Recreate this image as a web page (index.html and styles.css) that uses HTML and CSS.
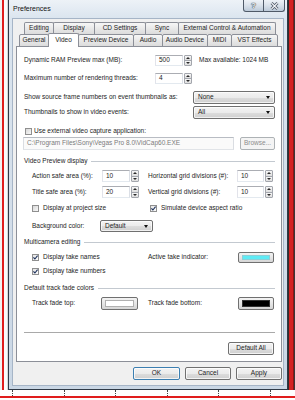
FILE: index.html
```html
<!DOCTYPE html>
<html>
<head>
<meta charset="utf-8">
<title>Preferences</title>
<link rel="stylesheet" href="styles.css">
</head>
<body>
<div class="screen">
  <div class="left-strip"></div>
  <div class="dialog">
    <div class="titlebar">
      <div class="title">Preferences</div>
      <div class="caption">
        <div class="capbtn helpbtn">?</div>
        <div class="capbtn closebtn"><svg width="9" height="8" viewBox="0 0 9 8"><path d="M1.5 1 L7.5 7 M7.5 1 L1.5 7" stroke="#4d5765" stroke-width="2.8"/><path d="M1.5 1 L7.5 7 M7.5 1 L1.5 7" stroke="#f4f6f9" stroke-width="1.1"/></svg></div>
      </div>
    </div>
    <div class="client">
      <div class="tabs">
        <div class="tabrow row1">
          <span class="tab t-editing">Editing</span>
          <span class="tab t-display">Display</span>
          <span class="tab t-cd">CD Settings</span>
          <span class="tab t-sync">Sync</span>
          <span class="tab t-ext">External Control &amp; Automation</span>
        </div>
        <div class="tabrow row2">
          <span class="tab t-general">General</span>
          <span class="tab t-video sel">Video</span>
          <span class="tab t-preview">Preview Device</span>
          <span class="tab t-audio">Audio</span>
          <span class="tab t-audiodev">Audio Device</span>
          <span class="tab t-midi">MIDI</span>
          <span class="tab t-vst">VST Effects</span>
        </div>
      </div>
      <div class="panel">
        <div class="row r-ram">
          <span class="lbl w-top">Dynamic RAM Preview max (MB):</span>
          <span class="field w-num">500</span>
          <span class="spin"><i class="up"></i><i class="dn"></i></span>
          <span class="note">Max available: 1024 MB</span>
        </div>
        <div class="row r-threads">
          <span class="lbl w-top">Maximum number of rendering threads:</span>
          <span class="field w-num">4</span>
          <span class="spin"><i class="up"></i><i class="dn"></i></span>
        </div>
        <div class="row r-source">
          <span class="lbl w-combo">Show source frame numbers on event thumbnails as:</span>
          <span class="combo w-wide"><span>None</span><i class="arrow"></i></span>
        </div>
        <div class="row r-thumbs">
          <span class="lbl w-combo">Thumbnails to show in video events:</span>
          <span class="combo w-wide"><span>All</span><i class="arrow"></i></span>
        </div>
        <div class="row r-ext">
          <span class="cb"></span>
          <span>Use external video capture application:</span>
        </div>
        <div class="row r-path">
          <span class="field disabled w-path">C:\Program Files\Sony\Vegas Pro 8.0\VidCap60.EXE</span>
          <span class="btn disabled w-browse">Browse...</span>
        </div>
        <div class="row group r-vpd">
          <span>Video Preview display</span><i class="gline"></i>
        </div>
        <div class="row indent r-action">
          <span class="lbl w-safe">Action safe area (%):</span>
          <span class="field w-num">10</span>
          <span class="spin"><i class="up"></i><i class="dn"></i></span>
          <span class="lbl w-grid gap-l">Horizontal grid divisions (#):</span>
          <span class="field w-num2">10</span>
          <span class="spin"><i class="up"></i><i class="dn"></i></span>
        </div>
        <div class="row indent r-title">
          <span class="lbl w-safe">Title safe area (%):</span>
          <span class="field w-num">20</span>
          <span class="spin"><i class="up"></i><i class="dn"></i></span>
          <span class="lbl w-grid gap-l">Vertical grid divisions (#):</span>
          <span class="field w-num2">10</span>
          <span class="spin"><i class="up"></i><i class="dn"></i></span>
        </div>
        <div class="row indent r-proj">
          <span class="cell w-cell1"><span class="cb"></span><span>Display at project size</span></span>
          <span class="cell"><span class="cb checked"><svg width="5" height="5" viewBox="0 0 5 5"><path d="M0.4 2.4 L1.9 4 L4.6 0.7" fill="none" stroke="#1b2f5a" stroke-width="1.1"/></svg></span><span>Simulate device aspect ratio</span></span>
        </div>
        <div class="row indent r-bg">
          <span class="lbl w-bg">Background color:</span>
          <span class="combo w-bgc"><span>Default</span><i class="arrow"></i></span>
        </div>
        <div class="row group r-multi">
          <span>Multicamera editing</span><i class="gline"></i>
        </div>
        <div class="row indent r-names">
          <span class="cell w-cell2"><span class="cb checked"><svg width="5" height="5" viewBox="0 0 5 5"><path d="M0.4 2.4 L1.9 4 L4.6 0.7" fill="none" stroke="#1b2f5a" stroke-width="1.1"/></svg></span><span>Display take names</span></span>
          <span class="lbl w-grid2">Active take indicator:</span>
          <span class="swatch w-sw2"><i class="chip cyan"></i></span>
        </div>
        <div class="row indent r-numbers">
          <span class="cell"><span class="cb checked"><svg width="5" height="5" viewBox="0 0 5 5"><path d="M0.4 2.4 L1.9 4 L4.6 0.7" fill="none" stroke="#1b2f5a" stroke-width="1.1"/></svg></span><span>Display take numbers</span></span>
        </div>
        <div class="row group r-fade">
          <span>Default track fade colors</span><i class="gline"></i>
        </div>
        <div class="row indent r-fades">
          <span class="lbl w-fade">Track fade top:</span>
          <span class="swatch w-sw1"><i class="chip white"></i></span>
          <span class="lbl w-grid2 gap-l2">Track fade bottom:</span>
          <span class="swatch w-sw2"><i class="chip black"></i></span>
        </div>
        <div class="sep"></div>
        <div class="row r-default">
          <span class="btn w-def">Default All</span>
        </div>
      </div>
      <div class="actions">
        <span class="btn w-ok default">OK</span>
        <span class="btn w-cancel">Cancel</span>
        <span class="btn w-apply">Apply</span>
      </div>
    </div>
  </div>
  <div class="right-strip"></div>
</div>
<div class="bottom-strip">
  <i class="tick"></i><i class="tick"></i><i class="tick"></i><i class="tick"></i><i class="tick"></i><i class="tick"></i>
</div>
</body>
</html>
```

FILE: styles.css
```css
* { box-sizing: border-box; margin: 0; padding: 0; }
html, body { width: 295px; height: 400px; overflow: hidden; background: #fff; }
body {
  font-family: "Liberation Sans", Arial, sans-serif;
  font-size: 6.5px;
  line-height: 1;
  color: #1c1c1c;
}
i { font-style: normal; display: block; }

.screen { display: flex; height: 390px; }
.left-strip {
  width: 8px;
  flex: none;
  background: linear-gradient(90deg, #f2f2f2 0 2px, #e01d1d 2px 4px, #fbfbfb 4px 7px, #d9d9d9 7px 8px);
}
.right-strip {
  width: 7px;
  flex: none;
  background: linear-gradient(90deg, #2e2e2e 0 1px, #d42222 1px 5px, #8c1616 5px 6px, #3a3a3a 6px 7px);
}

/* dialog frame */
.dialog {
  width: 280px;
  height: 390px;
  flex: none;
  display: flex;
  flex-direction: column;
  border: 1px solid #2f3a47;
  border-top: 0;
  padding: 0 3px 3px 3px;
  background: linear-gradient(180deg, #edf2f7 0, #dbe5ef 18px, #d2dde9 60%, #cad7e5 100%);
}
.titlebar {
  height: 18px;
  flex: none;
  display: flex;
  align-items: flex-start;
  justify-content: space-between;
}
.title {
  font-size: 7px;
  line-height: 18px;
  padding-left: 1px;
  color: #111;
}
.caption {
  margin-left: auto;
  margin-right: -1px;
  display: flex;
  flex: none;
  position: relative;
  z-index: 5;
}
.capbtn {
  height: 12px;
  display: flex;
  align-items: center;
  justify-content: center;
  border: 1px solid #4f5a68;
  border-top: 0;
  background: linear-gradient(180deg, #eef2f7 0, #d9e1ea 50%, #bccad9 100%);
}
.helpbtn {
  width: 21px;
  border-radius: 0 0 0 3px;
  font-size: 8px;
  font-weight: bold;
  color: #f4f6f9;
  text-shadow: 0 0 1px #3f4955, 0 0 1px #3f4955, 0 0 1px #3f4955;
}
.closebtn {
  width: 22px;
  margin-left: -1px;
  border-radius: 0 0 3px 0;
}

.client {
  height: 368px;
  flex: none;
  display: flex;
  flex-direction: column;
  border: 1px solid #a6b5c7;
  background: #f0f0f0;
  padding: 3px 1px 5px 3px;
}

/* tabs */
.tabs {
  display: flex;
  flex-direction: column;
  margin-bottom: -1px;
  position: relative;
  z-index: 1;
}
.tabrow { display: flex; align-items: flex-start; }
.row1 { height: 12px; margin-left: 8px; }
.row2 { height: 13px; margin-left: 3px; }
.tab {
  height: 12px;
  margin-right: -1px;
  display: flex;
  align-items: center;
  justify-content: center;
  white-space: nowrap;
  border: 1px solid #8c8f98;
  border-bottom: 0;
  border-radius: 2px 2px 0 0;
  background: linear-gradient(180deg, #f6f6f6, #e7e7e7 55%, #dcdcdc);
}
.row2 .tab { height: 13px; border-bottom: 1px solid #8c8f98; }
.row2 .tab.sel {
  height: 14px;
  margin-top: -1px;
  border-bottom: 0;
  background: #fff;
  position: relative;
  z-index: 2;
}
.t-editing { width: 30px; }
.t-display { width: 42px; }
.t-cd { width: 52px; }
.t-sync { width: 34px; }
.t-ext { width: 98px; }
.t-general { width: 30px; }
.t-video { width: 31px; }
.t-preview { width: 56px; }
.t-audio { width: 30px; }
.t-audiodev { width: 46px; }
.t-midi { width: 25px; }
.t-vst { width: 47px; }

/* panel */
.panel {
  width: 266px;
  height: 316px;
  border: 1px solid #8c8f98;
  background: #fff;
  padding: 8px 6px 0 7px;
  display: flex;
  flex-direction: column;
}
.row { display: flex; align-items: center; flex: none; white-space: nowrap; }
.indent { padding-left: 8px; }
.lbl { flex: none; }

.r-ram { height: 11px; }
.r-threads { height: 11px; margin-top: 7px; }
.r-source { height: 13px; margin-top: 7px; }
.r-thumbs { height: 13px; margin-top: 2px; }
.r-ext { height: 10px; margin-top: 7px; padding-left: 1px; }
.r-path { height: 13px; margin-top: 1px; margin-left: -1px; }
.r-vpd { height: 10px; margin-top: 6px; }
.r-action { height: 12px; margin-top: 4px; }
.r-title { height: 12px; margin-top: 4px; }
.r-proj { height: 10px; margin-top: 5px; }
.r-bg { height: 12px; margin-top: 7px; }
.r-multi { height: 10px; margin-top: 5px; }
.r-names { height: 11px; margin-top: 5px; }
.r-numbers { height: 10px; margin-top: 3px; }
.r-fade { height: 10px; margin-top: 7px; }
.r-fades { height: 13px; margin-top: 4px; }
.r-default { height: 13px; margin-top: 8px; justify-content: flex-end; padding-right: 1px; }

.w-top { width: 131px; }
.w-num { width: 28px; }
.w-num2 { width: 27px; }
.w-combo { width: 169px; }
.w-wide { width: 82px; }
.w-path { width: 211px; }
.w-browse { width: 35px; margin-left: 6px; }
.w-safe { width: 70px; }
.w-grid { width: 89px; }
.gap-l { margin-left: 9px; }
.w-cell1 { width: 118px; }
.w-cell2 { width: 116px; }
.w-bg { width: 68px; }
.w-bgc { width: 53px; }
.w-grid2 { width: 90px; }
.w-fade { width: 69px; }
.w-sw1 { width: 37px; }
.w-sw2 { width: 36px; }
.gap-l2 { margin-left: 10px; }
.w-def { width: 46px; }
.w-ok { width: 47px; }
.w-cancel { width: 46px; }
.w-apply { width: 46px; }

.note { margin-left: 7px; }

/* edit fields */
.field {
  height: 100%;
  display: flex;
  align-items: center;
  padding-left: 3px;
  background: #fff;
  border: 1px solid;
  border-color: #abadb3 #dbdfe6 #e3e9ef #e2e3ea;
  flex: none;
}
.field.disabled {
  color: #7a7a7a;
  background: #fafafa;
  border-color: #b8bcc3 #dadde2 #e1e4e8 #dadde2;
}

/* spinner */
.spin {
  width: 8px;
  height: 100%;
  margin-left: 1px;
  display: flex;
  flex-direction: column;
  border: 1px solid #a3a6ad;
  border-radius: 1px;
  flex: none;
}
.spin i {
  flex: 1;
  display: flex;
  align-items: center;
  justify-content: center;
  background: linear-gradient(180deg, #f7f7f7, #dedede);
}
.spin i + i { border-top: 1px solid #a3a6ad; }
.spin .up::before {
  content: "";
  border-left: 2px solid transparent;
  border-right: 2px solid transparent;
  border-bottom: 2px solid #2a2a2a;
}
.spin .dn::before {
  content: "";
  border-left: 2px solid transparent;
  border-right: 2px solid transparent;
  border-top: 2px solid #2a2a2a;
}

/* combo */
.combo {
  height: 100%;
  display: flex;
  align-items: center;
  justify-content: space-between;
  padding: 0 4px 0 4px;
  border: 1px solid #707070;
  border-radius: 2px;
  background: linear-gradient(180deg, #f3f3f3 0, #ebebeb 50%, #dddddd 51%, #cfcfcf 100%);
  box-shadow: inset 0 0 0 1px rgba(255,255,255,0.7);
  flex: none;
}
.arrow {
  width: 0;
  height: 0;
  border-left: 2.5px solid transparent;
  border-right: 2.5px solid transparent;
  border-top: 3px solid #111;
}

/* buttons */
.btn {
  height: 100%;
  display: flex;
  align-items: center;
  justify-content: center;
  border: 1px solid #707070;
  border-radius: 2px;
  background: linear-gradient(180deg, #f3f3f3 0, #ebebeb 50%, #dddddd 51%, #cfcfcf 100%);
  box-shadow: inset 0 0 0 1px rgba(255,255,255,0.75);
  flex: none;
}
.btn.disabled {
  color: #8d8d8d;
  border-color: #adb2b5;
  background: #f4f4f4;
  box-shadow: none;
}
.btn.default { border-color: #3c7fb1; }

/* checkbox */
.cb {
  width: 7px;
  height: 7px;
  margin-right: 4px;
  border: 1px solid #8f8f8f;
  background: linear-gradient(135deg, #d8d8d8, #f8f8f8);
  display: flex;
  align-items: center;
  justify-content: center;
  flex: none;
}
.r-ext .cb { margin-right: 2px; }
.cb.checked { background: linear-gradient(135deg, #e4e4e4, #fdfdfd); }
.cb svg { display: block; }
.cell { display: flex; align-items: center; flex: none; }

/* group label */
.gline {
  flex: 1;
  height: 1px;
  margin-left: 4px;
  background: #c3c9d0;
}

/* colour swatches */
.swatch {
  height: 100%;
  padding: 2px 3px;
  border: 1px solid #707070;
  border-radius: 2px;
  background: linear-gradient(180deg, #f3f3f3, #e6e6e6 50%, #d5d5d5);
  flex: none;
}
.chip { height: 100%; border: 1px solid #9a9a9a; }
.chip.cyan { background: #5eebf5; border-color: #8ecfd6; }
.chip.white { background: #fff; border-color: #b0b0b0; }
.chip.black { background: #000; border-color: #333; }

.sep {
  height: 2px;
  margin-top: 22px;
  border-top: 1px solid #a9a9a9;
  border-bottom: 1px solid #fff;
  flex: none;
}

/* dialog buttons */
.actions {
  height: 13px;
  margin-top: 5px;
  display: flex;
  justify-content: flex-end;
  gap: 5px;
}

/* bottom of screen */
.bottom-strip {
  height: 10px;
  display: flex;
  align-items: flex-start;
  gap: 50.6px;
  padding-left: 12px;
  background: linear-gradient(180deg, #fff 0 6px, #e01d1d 6px 8px, #fff 8px 10px);
}
.tick {
  width: 1px;
  height: 6px;
  border-left: 1px dotted #444;
}
```
